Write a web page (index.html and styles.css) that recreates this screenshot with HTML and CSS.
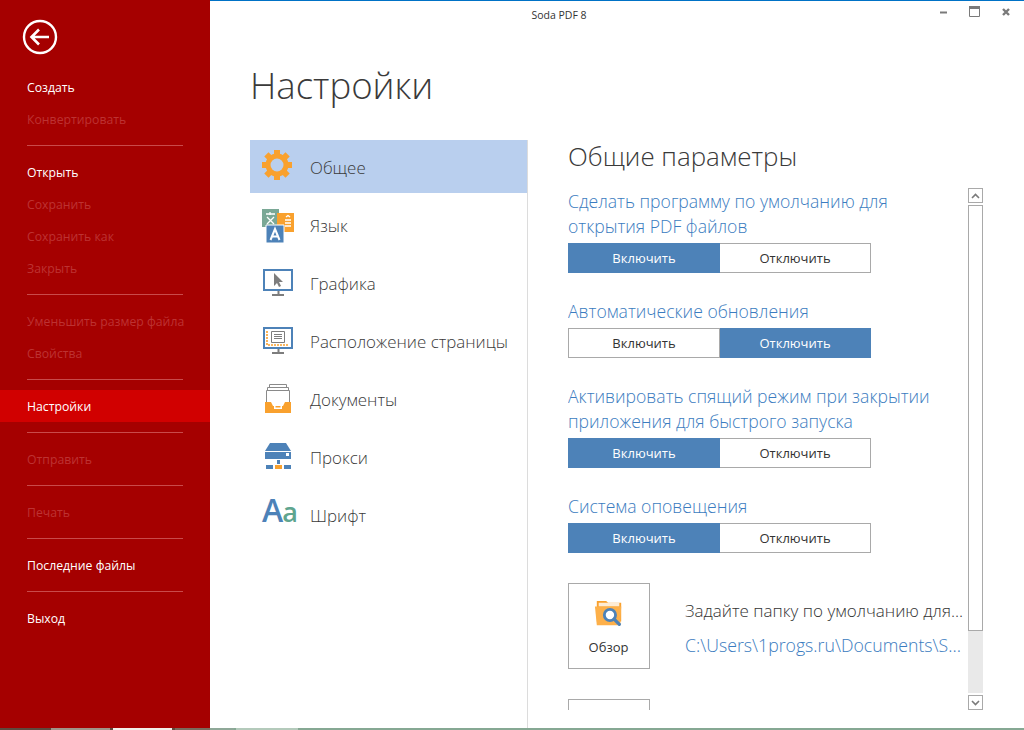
FILE: index.html
```html
<!DOCTYPE html>
<html lang="ru">
<head>
    <meta charset="UTF-8">
    <title>Soda PDF 8</title>
    <link rel="stylesheet" href="styles.css">
</head>
<body>
    <div class="window">
        <!-- Меню слева -->
        <aside class="sidebar">
            <div class="back">
                <svg width="36" height="36" viewBox="0 0 36 36"><circle cx="18" cy="18" r="16" fill="none" stroke="#fff" stroke-width="2.4"/><path d="M27 18H10M17 10.500L9.500 18l7.500 7.500" fill="none" stroke="#fff" stroke-width="2.600"/></svg>
            </div>
            <a class="item">Создать</a>
            <a class="item off">Конвертировать</a>
            <hr>
            <a class="item">Открыть</a>
            <a class="item off">Сохранить</a>
            <a class="item off">Сохранить как</a>
            <a class="item off">Закрыть</a>
            <hr>
            <a class="item off">Уменьшить размер файла</a>
            <a class="item off">Свойства</a>
            <hr>
            <a class="item active">Настройки</a>
            <hr>
            <a class="item off">Отправить</a>
            <hr>
            <a class="item off">Печать</a>
            <hr>
            <a class="item">Последние файлы</a>
            <hr>
            <a class="item">Выход</a>
        </aside>

        <main class="main">
            <div class="titlebar">
                <span class="app-name">Soda PDF 8</span>
                <div class="win-buttons">
                    <svg width="10" height="10" viewBox="0 0 10 10"><path d="M3 6.500h7" stroke="#7a7a7a" stroke-width="2"/></svg>
                    <svg width="11" height="11" viewBox="0 0 11 11"><path d="M.5.500h10v10H.5z" fill="none" stroke="#7a7a7a"/><path d="M0 0h11v3H0z" fill="#7a7a7a"/></svg>
                    <svg width="10" height="10" viewBox="0 0 10 10"><path d="M1 3l6 6M7 3L1 9" stroke="#7a7a7a" stroke-width="2.400"/></svg>
                </div>
            </div>
            <h1>Настройки</h1>
            <div class="columns">
                <!-- Разделы настроек -->
                <nav class="sections">
                    <a class="section current">
                        <svg width="36" height="36" viewBox="-2 -2 36 36"><g fill="#f9a12e"><circle cx="16" cy="16" r="11.500"/><path d="M13 1h6v6h-6zM13 25h6v6h-6zM1 13h6v6H1zM25 13h6v6h-6z"/><path d="M13 1h6v6h-6zM13 25h6v6h-6zM1 13h6v6H1zM25 13h6v6h-6z" transform="rotate(45 16 16)"/></g><circle cx="16" cy="16" r="6.500" fill="#b9cfee"/></svg>
                        <span>Общее</span>
                    </a>
                    <a class="section">
                        <svg width="36" height="36" viewBox="0 0 36 36"><path d="M3 1h17v18H3z" fill="#7aa896"/><path d="M7 6h9M11 4v3M8 9l7 7M15 9l-7 7" stroke="#fff" stroke-width="1.300" fill="none"/><path d="M18 5h17v19H18z" fill="#f9a12e"/><path d="M26 12h6M26 15h6M26 18h6M27 9l2-1.500 2 1.500" stroke="#fff" stroke-width="1.400" fill="none"/><path d="M7 17h18v18H7z" fill="#4d82b8" stroke="#fff"/><path d="M11.500 32l4.500-11 4.500 11M13 28.500h6" stroke="#fff" stroke-width="2" fill="none"/></svg>
                        <span>Язык</span>
                    </a>
                    <a class="section">
                        <svg width="36" height="36" viewBox="0 0 36 36"><path d="M5 4h28v20H5z" fill="#fff" stroke="#4d82b8" stroke-width="2"/><path d="M15 7v13l3-3 2 4 2-1-2-4h4z" fill="#7d7d7d"/><path d="M18.500 25h2v4h-2zM13 28h12v2H13z" fill="#7d7d7d"/></svg>
                        <span>Графика</span>
                    </a>
                    <a class="section">
                        <svg width="36" height="36" viewBox="0 0 36 36"><path d="M5 4h28v20H5z" fill="#fff" stroke="#4d82b8" stroke-width="2"/><path d="M8 7v14h22" fill="none" stroke="#f9a12e" stroke-width="1.600" stroke-dasharray="2 1"/><path d="M12.500 7.500h13v11h-13z" fill="#fff" stroke="#7d7d7d"/><path d="M15 10.500h8M15 12.500h8M15 14.500h8" stroke="#7d7d7d"/><path d="M18.500 25h2v4h-2zM13 28h12v2H13z" fill="#7d7d7d"/></svg>
                        <span>Расположение страницы</span>
                    </a>
                    <a class="section">
                        <svg width="36" height="36" viewBox="0 0 36 36"><path d="M10.500 5V2.500h17V5M8.500 8V5.500h21V8" fill="none" stroke="#8a8a8a"/><path d="M7.500 20V8.500h23V20" fill="#fff" stroke="#8a8a8a"/><path d="M6 20h6l2 4h10l2-4h6v11H6z" fill="#f9a12e"/><path d="M15 24h1.500v1.500h5V24H23v3h-8z" fill="#fff"/></svg>
                        <span>Документы</span>
                    </a>
                    <a class="section">
                        <svg width="36" height="36" viewBox="0 0 36 36"><path d="M11 3h16l5 8H6z" fill="#4d82b8"/><path d="M6 12h26v7H6z" fill="#4d82b8"/><path d="M27 13h3v3h-3z" fill="#fff"/><path d="M18 20h3v4h-3zM7 25h7v4H7zM25 25h7v4h-7z" fill="#4d82b8"/><path d="M16 25h7v4h-7z" fill="#f9a12e"/></svg>
                        <span>Прокси</span>
                    </a>
                    <a class="section">
                        <span class="aa"><b>A</b><i>a</i></span>
                        <span>Шрифт</span>
                    </a>
                </nav>

                <!-- Общие параметры -->
                <section class="params">
                    <h2>Общие параметры</h2>
                    <div class="scroll-area">
                        <div class="scroll-content">
                            <div class="option">
                                <p>Сделать программу по умолчанию для<br>открытия PDF файлов</p>
                                <div class="toggle"><span class="on">Включить</span><span>Отключить</span></div>
                            </div>
                            <div class="option">
                                <p>Автоматические обновления</p>
                                <div class="toggle"><span>Включить</span><span class="on">Отключить</span></div>
                            </div>
                            <div class="option">
                                <p>Активировать спящий режим при закрытии<br>приложения для быстрого запуска</p>
                                <div class="toggle"><span class="on">Включить</span><span>Отключить</span></div>
                            </div>
                            <div class="option">
                                <p>Система оповещения</p>
                                <div class="toggle"><span class="on">Включить</span><span>Отключить</span></div>
                            </div>
                            <div class="folder">
                                <div class="browse">
                                    <svg width="30" height="30" viewBox="0 0 32 32"><path d="M3 2h10l2 2h14v20H3z" fill="#f9a12e"/><path d="M5 4h22v4H5z" fill="#fff" opacity=".8"/><path d="M1 8h28l-1 20H3z" fill="#fdb04a"/><circle cx="17" cy="17" r="6" fill="#fff" stroke="#4d82b8" stroke-width="3"/><path d="M21.500 21.500L27 27" stroke="#4d82b8" stroke-width="3.500" stroke-linecap="round"/></svg>
                                    <span>Обзор</span>
                                </div>
                                <div class="folder-text">
                                    <div>Задайте папку по умолчанию для...</div>
                                    <div class="path">C:\Users\1progs.ru\Documents\S...</div>
                                </div>
                            </div>
                            <div class="browse"></div>
                        </div>
                        <div class="scrollbar">
                            <div class="arrow"><svg width="9" height="6" viewBox="0 0 9 6"><path d="M1 5l3.500-3.500L8 5" fill="none" stroke="#7a7a7a" stroke-width="1.600"/></svg></div>
                            <div class="track"><div class="thumb"></div></div>
                            <div class="arrow"><svg width="9" height="6" viewBox="0 0 9 6"><path d="M1 1l3.500 3.500L8 1" fill="none" stroke="#7a7a7a" stroke-width="1.600"/></svg></div>
                        </div>
                    </div>
                </section>
            </div>
        </main>
    </div>
    <!-- Полоска рабочего стола под окном -->
    <div class="desktop">
        <i class="d1"></i><i class="d2"></i><i class="d1 gap"></i><i class="d3"></i><i class="d1 gap"></i><i class="d4"></i><i class="d5"></i><i class="d6"></i>
    </div>
</body>
</html>
```

FILE: styles.css
```css
* {
    box-sizing: border-box;
}

body {
    margin: 0;
    width: 1024px;
    height: 730px;
    overflow: hidden;
    font-family: "Open Sans", "Noto Sans", sans-serif;
    background-color: #fff;
    display: flex;
    flex-direction: column;
}

.window {
    flex: 1;
    display: flex;
    min-height: 0;
}

/* Меню слева */
.sidebar {
    width: 210px;
    flex-shrink: 0;
    background-color: #a50000;
    padding-top: 19px;
}

.back {
    height: 52px;
    padding-left: 22px;
}

.item {
    display: block;
    height: 32px;
    line-height: 34px;
    padding-left: 27px;
    font-size: 12.250px;
    color: #fff;
}

.item.off {
    color: #bd3232;
}

.item.active {
    background-color: #d10000;
}

.sidebar hr {
    height: 1px;
    margin: 10px 27px;
    border: none;
    background-color: #c94a4a;
}

/* Основная часть */
.main {
    flex: 1;
    display: flex;
    flex-direction: column;
    min-width: 0;
    border-top: 1px solid #0072c6;
}

.titlebar {
    height: 28px;
    display: flex;
    align-items: center;
    justify-content: center;
    position: relative;
    flex-shrink: 0;
}

.app-name {
    font-size: 10.500px;
    color: #333;
    margin-left: -116px;
}

.win-buttons {
    position: absolute;
    top: 5px;
    right: 12px;
    display: flex;
    gap: 22px;
}

h1 {
    margin: 32px 0 0 40px;
    height: 79px;
    font-size: 36.600px;
    font-weight: 300;
    line-height: 48px;
    color: #3a3a3a;
}

.columns {
    flex: 1;
    display: flex;
    min-height: 0;
    padding-left: 40px;
}

.sections {
    width: 278px;
    border-right: 1px solid #dcdcdc;
    flex-shrink: 0;
}

.section {
    height: 58px;
    display: flex;
    align-items: center;
    gap: 15px;
    padding-left: 9px;
    font-size: 16.900px;
    color: #3a3a3a;
    font-weight: 300;
}

.section span {
    margin-top: -2px;
}

.section svg, .aa {
    flex-shrink: 0;
    width: 36px;
}

.section.current {
    height: 53px;
    margin-bottom: 4px;
    background-color: #b9cfee;
    padding-top: 3px;
}

.section.current svg {
    margin-bottom: 6px;
}

.section .aa {
    font-size: 32px;
    line-height: 36px;
    height: 36px;
    margin-top: -12px;
    padding-left: 3px;
    letter-spacing: -1px;
    white-space: nowrap;
}

.aa b {
    color: #4d82b8;
    font-weight: 600;
}

.aa i {
    color: #5fa58f;
    font-style: normal;
    font-size: 27px;
    font-weight: 600;
}

/* Параметры */
.params {
    flex: 1;
    min-width: 0;
    padding-left: 40px;
    display: flex;
    flex-direction: column;
}

h2 {
    margin: 0;
    height: 48px;
    font-size: 25.900px;
    font-weight: 300;
    line-height: 32px;
    color: #3a3a3a;
}

.scroll-area {
    display: flex;
    height: 522px;
}

.scroll-content {
    width: 400px;
    overflow: hidden;
    padding-top: 1px;
}

.option {
    margin-bottom: 26px;
}

.option p {
    margin: 0 0 4px;
    font-size: 17.600px;
    line-height: 25px;
    color: #3b7cc0;
    font-weight: 300;
}

.toggle {
    display: flex;
    width: 303px;
    height: 30px;
}

.toggle span {
    flex: 1;
    display: flex;
    align-items: center;
    justify-content: center;
    border: 1px solid #a9a9a9;
    font-size: 13px;
    color: #333;
}

.toggle span + span {
    border-left: none;
}

.toggle .on {
    background-color: #4d82b8;
    border-color: #4d82b8;
    color: #fff;
}

.folder {
    display: flex;
    align-items: flex-start;
    gap: 35px;
    margin-top: 30px;
    margin-bottom: 30px;
}

.browse {
    width: 82px;
    height: 86px;
    flex-shrink: 0;
    border: 1px solid #a9a9a9;
    display: flex;
    flex-direction: column;
    align-items: center;
    padding-top: 15px;
    padding-right: 1px;
    font-size: 13px;
    color: #333;
    gap: 9px;
}

.folder-text {
    font-size: 17px;
    line-height: 24px;
    color: #333;
    white-space: nowrap;
    padding-top: 16px;
    font-weight: 300;
}

.path {
    margin-top: 10px;
    font-size: 17.700px;
    color: #3b7cc0;
}

.scrollbar {
    width: 15px;
    display: flex;
    flex-direction: column;
    gap: 2px;
}

.arrow {
    height: 15px;
    border: 1px solid #a9a9a9;
    display: flex;
    align-items: center;
    justify-content: center;
}

.track {
    flex: 1;
    background-color: #e9e9e9;
}

.thumb {
    height: 426px;
    background-color: #fff;
    border: 1px solid #a9a9a9;
}

/* Низ */
.desktop {
    height: 2px;
    flex-shrink: 0;
    display: flex;
    background-color: #86a893;
}

.desktop i {
    display: block;
    height: 2px;
}

.d1 { width: 51px; background-color: #5e4a3e; }
.d1.gap { width: 3px; }
.d2 { width: 59px; background-color: #a09488; }
.d3 { width: 59px; background-color: #f2efe9; }
.d4 { width: 35px; background-color: #7a6a5c; }
.d5 { width: 24px; background-color: #8fa898; }
.d6 { width: 62px; margin-left: 2px; background-color: #b4cabb; }
```
